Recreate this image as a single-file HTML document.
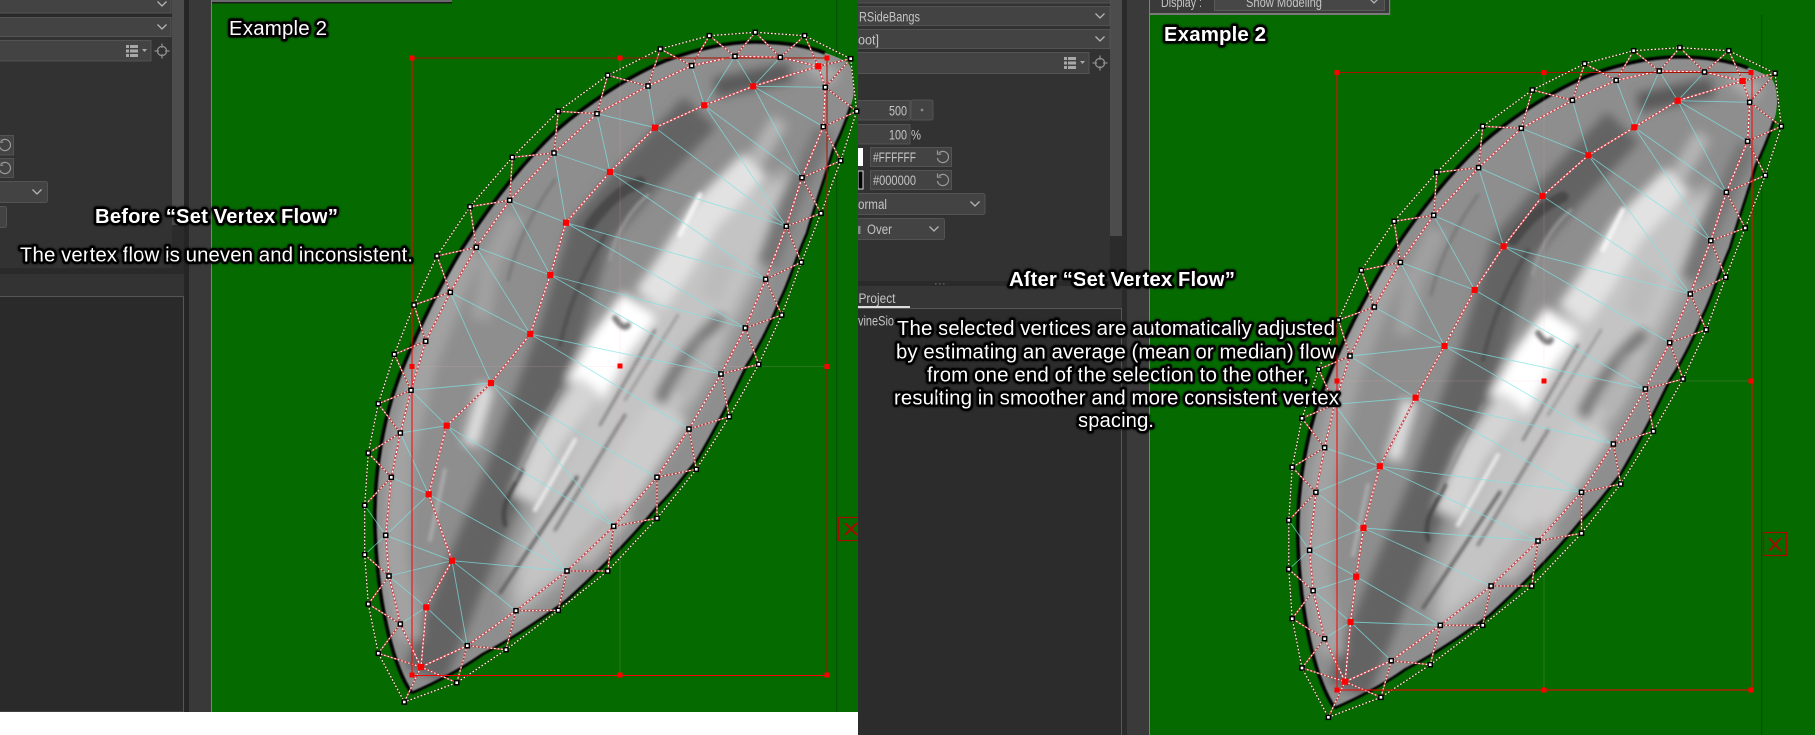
<!DOCTYPE html>
<html><head><meta charset="utf-8"><title>Set Vertex Flow</title>
<style>
html,body{margin:0;padding:0;background:#fff;width:1815px;height:735px;overflow:hidden}
svg{display:block}
.ui{font-family:"Liberation Sans",sans-serif;font-size:13.5px;fill:#c4c4c4}
.cap{font-family:"Liberation Sans",sans-serif;font-size:20.5px;fill:#fff;stroke:#000;stroke-width:5px;stroke-linejoin:round;paint-order:stroke fill;filter:drop-shadow(0 0 1px #000)}
.b{font-weight:bold}
.dd{fill:#434343;stroke:#535353;stroke-width:1}
.ch{fill:none;stroke:#b4b4b4;stroke-width:1.3}
</style></head><body>
<svg width="1815" height="735" viewBox="0 0 1815 735" xmlns="http://www.w3.org/2000/svg">
<defs>
<clipPath id="cr"><rect x="858" y="0" width="957" height="735"/></clipPath>
<filter id="bb" x="-20%" y="-20%" width="140%" height="140%"><feGaussianBlur stdDeviation="9"/></filter>
<filter id="bl" x="-20%" y="-20%" width="140%" height="140%"><feGaussianBlur stdDeviation="5"/></filter>
<filter id="bs" x="-10%" y="-10%" width="120%" height="120%"><feGaussianBlur stdDeviation="1.7"/></filter>
<filter id="be" x="-10%" y="-10%" width="120%" height="120%"><feGaussianBlur stdDeviation=".9"/></filter>
<clipPath id="cb"><path d="M411.7,693 C395,670 378,610 375,530 C373,470 385,410 403,367 C420,325 440,285 463,247 C490,205 520,165 557,130 C585,105 630,75 667,60 C700,48 730,42 755,42 C790,42 825,50 847,62 C856,70 855,95 851,105 C845,125 838,140 833,150 C825,178 815,205 807,233 C795,260 790,280 780,300 C770,325 760,345 747,365 C730,400 715,430 697,460 C685,475 670,495 657,507 C630,540 600,570 567,600 C540,620 510,640 483,654 C460,670 435,683 411.7,693 Z"/></clipPath>
<marker id="sq" markerUnits="userSpaceOnUse" markerWidth="9" markerHeight="9" refX="4.5" refY="4.5" overflow="visible"><rect x="1.7" y="1.7" width="5.6" height="5.6" fill="#000"/><rect x="3.2" y="3.2" width="2.6" height="2.6" fill="#fff"/></marker>
<marker id="sr" markerUnits="userSpaceOnUse" markerWidth="9" markerHeight="9" refX="4.5" refY="4.5" overflow="visible"><rect x="1.4" y="1.4" width="6.2" height="6.2" fill="#f00"/></marker>
<marker id="hd" markerUnits="userSpaceOnUse" markerWidth="9" markerHeight="9" refX="4.5" refY="4.5" overflow="visible"><rect x="2" y="2" width="5" height="5" fill="#f00"/></marker>

<g id="blade">
  <g clip-path="url(#cb)">
    <rect x="350" y="20" width="520" height="690" fill="#8e8e8e"/>
    <g filter="url(#bb)">
      <polygon fill="#c4c4c4" points="800,170 760,270 720,350 680,420 630,500 570,570 510,620 515,560 545,480 585,400 625,320 670,250 725,190"/>
    </g>
    <g filter="url(#bl)" fill="none" stroke-linecap="butt">
      <path d="M790,72 L715,88" stroke="#5a5a5a" stroke-width="20"/>
      <path d="M700,112 L640,175 L590,233 L560,333 L505,480 L465,575 L425,675" stroke="#646464" stroke-width="44"/>
      <path d="M780,120 L750,170" stroke="#b4b4b4" stroke-width="18"/>
      <path d="M755,165 L705,215 L675,265 L650,300" stroke="#e2e2e2" stroke-width="34"/>
      <path d="M640,305 L610,345 L585,390" stroke="#fff" stroke-width="42"/>
      <path d="M590,385 L550,440 L525,500" stroke="#d4d4d4" stroke-width="30"/>
      <path d="M728,255 L710,300" stroke="#bcbcbc" stroke-width="24"/>
      <path d="M723,317 C700,335 672,370 657,407" stroke="#727272" stroke-width="12"/>
      <path d="M712,345 L680,395" stroke="#b4b4b4" stroke-width="20"/>
      <path d="M670,410 L630,470 L600,510" stroke="#cccccc" stroke-width="40"/>
      <path d="M625,510 L580,560" stroke="#b8b4b4" stroke-width="22"/>
      <path d="M825,130 L790,205 L768,265" stroke="#747474" stroke-width="20"/>
      <path d="M470,250 L425,360 L400,460 L395,560 L410,640" stroke="#a2a2a2" stroke-width="26"/>
      <path d="M515,215 L490,265 L480,320" stroke="#a0a0a0" stroke-width="20"/>
      <path d="M835,80 L810,62" stroke="#aaa" stroke-width="18"/>
      <path d="M487,385 L470,445" stroke="#dedede" stroke-width="16"/>
    </g>
    <g filter="url(#bs)" fill="none" stroke-linecap="round">
      <path d="M640,182 C620,190 605,205 590,225" stroke="#484848" stroke-width="11"/>
      <path d="M605,235 C585,270 570,300 560,345" stroke="#505050" stroke-width="4"/>
      <path d="M522,470 C510,495 500,505 505,525" stroke="#444" stroke-width="4"/>
      <path d="M577,477 L500,593" stroke="#5a5a5a" stroke-width="3"/>
      <path d="M625,415 L555,530" stroke="#7c7c7c" stroke-width="3"/>
      <path d="M655,330 L600,425" stroke="#7c7c7c" stroke-width="2.5"/>
      <path d="M678,315 L625,400" stroke="#979797" stroke-width="2.5"/>
      <path d="M615,318 C620,325 625,330 628,325" stroke="#808080" stroke-width="6"/>
      <path d="M700,195 L680,235" stroke="#f4f4f4" stroke-width="5"/>
      <path d="M445,470 L430,540" stroke="#aaa" stroke-width="4"/>
      <path d="M648,195 C630,210 615,235 610,260" stroke="#9a9a9a" stroke-width="3"/>
      <path d="M555,180 C530,215 515,250 508,280" stroke="#787878" stroke-width="3"/>
      <path d="M575,440 L535,510" stroke="#eaeaea" stroke-width="4"/>
      <path d="M560,390 L515,480" stroke="#8a8a8a" stroke-width="2.5"/>
    </g>
  </g>
  <path d="M851,105 C845,125 838,140 833,150 C825,178 815,205 807,233 C795,260 790,280 780,300 C770,325 760,345 747,365 C730,400 715,430 697,460 C685,475 670,495 657,507 C630,540 600,570 567,600 C540,620 510,640 483,654 C460,670 435,683 411.7,693" fill="none" stroke="#000" stroke-width="2.6" filter="url(#be)"/>
  <path d="M411.7,693 C395,670 378,610 375,530 C373,470 385,410 403,367 C420,325 440,285 463,247 C490,205 520,165 557,130 C585,105 630,75 667,60 C700,48 730,42 755,42 C780,42 805,45 825,53" fill="none" stroke="#000" stroke-width="3.6" filter="url(#be)"/>
</g>

<polygon id="LO" fill="none" points="850.7,58.7 856.7,111.3 840.7,160.7 821,213.3 801.3,262.3 781.7,315 758.7,364.3 729.3,416.7 696.3,469.3 657,518.3 607.7,571 558.3,610.3 506,649.7 456.7,682.7 404.3,702 378.3,653.3 368.3,604 364.7,554.7 364.7,505.3 368.3,453 378.3,403.7 394.3,354.3 414,305 437,256 470,206.7 512.3,157.3 558.3,111.3 607.7,75.3 660.3,49 709.3,35.7 755.3,32.3 804.7,35.7"/>
<polygon id="LM" fill="none" points="818.3,66.3 780.3,57.3 735,56.3 691.7,65.7 648,86 597,113.7 554,153 509.7,200.3 476.3,247.3 450.3,292.3 425.7,341.3 411,390.3 400.3,433 391.3,477.3 385.7,535.3 389,576 400.3,624 421,667 467.3,645.7 516,610.7 567,571 613.7,526.3 657,477.3 689,429 721,374 745.3,328 765.7,279.3 786.3,226.3 802,177.7 823.3,126.7 825.3,87.3"/>
<polyline id="LS" fill="none" points="818.3,66.3 753.3,86.3 704.3,105.3 655,127.7 610,172 566,222.7 550.3,275 530.3,334 491,383 446.7,425.7 428.7,494.3 452,560.7 426.3,607.3 421,667"/>
<path id="LC" fill="none" d="M818.3,66.3 804.7,35.7 780.3,57.3 755.3,32.3 735,56.3 709.3,35.7 691.7,65.7 660.3,49 648,86 607.7,75.3 597,113.7 558.3,111.3 554,153 512.3,157.3 509.7,200.3 470,206.7 476.3,247.3 437,256 450.3,292.3 414,305 425.7,341.3 394.3,354.3 411,390.3 378.3,403.7 400.3,433 368.3,453 391.3,477.3 364.7,505.3 M364.7,554.7 389,576 368.3,604 400.3,624 378.3,653.3 421,667 404.3,702 M421,667 456.7,682.7 467.3,645.7 506,649.7 516,610.7 558.3,610.3 567,571 607.7,571 613.7,526.3 657,518.3 657,477.3 696.3,469.3 689,429 729.3,416.7 721,374 758.7,364.3 745.3,328 781.7,315 765.7,279.3 801.3,262.3 786.3,226.3 821,213.3 802,177.7 840.7,160.7 823.3,126.7 856.7,111.3 825.3,87.3 850.7,58.7 818.3,66.3"/>

<polygon id="RO" fill="none" points="1775.1,73.3 1781.3,126.3 1765.3,175.3 1745.2,228 1725.7,277.3 1706.2,329.7 1683,379 1653.4,431.3 1620.7,484 1581.5,533.3 1531.7,586 1482.7,625.3 1430.2,664.7 1380.9,697.3 1328.4,717.3 1302,668 1292.2,618.7 1288.8,569.3 1288.8,520.3 1292.2,467.3 1302,418.3 1318.7,369.3 1338.5,320 1361.4,270.3 1394.1,221.3 1436.8,172.3 1482.7,126.3 1532.4,90 1584.6,63.7 1633.6,50.7 1679.8,47.7 1728.8,50.7"/>
<polygon id="RM" fill="none" points="1742.7,81 1704.5,72 1659.3,71 1616.2,80.3 1572.4,100.3 1521.3,128.3 1478.6,167.7 1433.7,215.3 1400.4,262.3 1374.3,307 1350,356 1334.7,404.3 1324.6,447.7 1315.9,492.3 1309.6,550.3 1313.1,590.7 1324.6,638.7 1345.1,681.7 1391.3,660.7 1440.3,625.3 1491.1,586 1538,541 1581.5,492.3 1613.4,444 1645.4,389 1669.7,342.7 1690.3,294 1710.8,240.7 1726.4,192.3 1747.6,141.3 1749.7,102.3"/>
<polyline id="RS" fill="none" points="1742.7,81 1677.7,100.7 1634.3,127.3 1588.4,155.3 1542.5,196 1503.6,246.3 1474.7,290 1444.5,346 1415.6,397.7 1379.8,466.3 1363.5,528 1356.2,576.7 1350.6,622 1345.1,681.7"/>
<path id="RC" fill="none" d="M1742.7,81 1728.8,50.7 1704.5,72 1679.8,47.7 1659.3,71 1633.6,50.7 1616.2,80.3 1584.6,63.7 1572.4,100.3 1532.4,90 1521.3,128.3 1482.7,126.3 1478.6,167.7 1436.8,172.3 1433.7,215.3 1394.1,221.3 1400.4,262.3 1361.4,270.3 1374.3,307 1338.5,320 1350,356 1318.7,369.3 1334.7,404.3 1302,418.3 1324.6,447.7 1292.2,467.3 1315.9,492.3 1288.8,520.3 M1288.8,569.3 1313.1,590.7 1292.2,618.7 1324.6,638.7 1302,668 1345.1,681.7 1328.4,717.3 M1345.1,681.7 1380.9,697.3 1391.3,660.7 1430.2,664.7 1440.3,625.3 1482.7,625.3 1491.1,586 1531.7,586 1538,541 1581.5,533.3 1581.5,492.3 1620.7,484 1613.4,444 1653.4,431.3 1645.4,389 1683,379 1669.7,342.7 1706.2,329.7 1690.3,294 1725.7,277.3 1710.8,240.7 1745.2,228 1726.4,192.3 1765.3,175.3 1747.6,141.3 1781.3,126.3 1749.7,102.3 1775.1,73.3 1742.7,81"/>

<g id="cross" fill="none" stroke="#8c8c8c" stroke-width="1.3"><circle r="4.6"/><path d="M0,-7.5V-3M0,7.5V3M-7.5,0H-3M7.5,0H3"/></g>
<g id="list" fill="#a8a8a8"><rect x="0" y="0" width="3" height="3"/><rect x="4" y="0" width="8" height="3"/><rect x="0" y="4.5" width="3" height="3"/><rect x="4" y="4.5" width="8" height="3"/><rect x="0" y="9" width="3" height="3"/><rect x="4" y="9" width="8" height="3"/><path d="M16,4h5l-2.5,3z"/></g>
<g id="reset" fill="none" stroke="#9a9a9a" stroke-width="1.2"><path d="M-4,-4 A5.6,5.6 0 1 1 -5.6,1"/><path d="M-5.5,-6.5V-2.8H-1.8"/></g>
<path id="chev" class="ch" d="M-4.5,-2.5 L0,2 L4.5,-2.5"/>
</defs>

<rect width="1815" height="735" fill="#fff"/>

<!-- LEFT IMAGE -->
<rect x="0" y="0" width="172" height="268" fill="#323232"/>
<rect x="172" y="0" width="12" height="225" fill="#4c4c4c"/>
<rect x="172" y="225" width="12" height="45" fill="#2b2b2b"/>
<rect x="-2" y="-8" width="173" height="21" class="dd"/>
<rect x="0" y="14" width="172" height="3" fill="#2a2a2a"/>
<rect x="-2" y="17.5" width="173" height="19" class="dd"/>
<use href="#chev" x="162" y="4"/><use href="#chev" x="162" y="27"/>
<rect x="-2" y="40.5" width="153" height="20.5" class="dd"/>
<use href="#list" x="126" y="45"/>
<use href="#cross" x="162" y="51"/>
<rect x="-2" y="135.5" width="15.5" height="19.5" class="dd"/><use href="#reset" x="5" y="145"/>
<rect x="-2" y="158.5" width="15.5" height="19" class="dd"/><use href="#reset" x="5" y="168"/>
<rect x="-3" y="181.5" width="50.5" height="21" rx="2" class="dd"/><use href="#chev" x="37" y="192"/>
<rect x="-3" y="206.5" width="9.5" height="21" rx="2" class="dd"/>
<rect x="0" y="268" width="184" height="6" fill="#2a2a2a"/>
<rect x="0" y="274" width="184" height="22" fill="#333"/>
<rect x="-2" y="296.5" width="185.5" height="415.5" fill="#2a2a2a" stroke="#565656"/>
<rect x="184" y="0" width="5" height="712" fill="#252525"/>
<rect x="189" y="0" width="22" height="712" fill="#393939"/>
<rect x="211" y="0" width="2" height="712" fill="#7f7f7f"/>
<rect x="0" y="712" width="858" height="23" fill="#fff"/>
<rect x="212" y="0" width="646" height="712" fill="#056a00"/>
<rect x="212" y="0" width="240" height="2" fill="#6a6a6a"/><rect x="212" y="2" width="240" height="1.5" fill="#1c1c1c"/>
<rect x="836" y="0" width="1.2" height="712" fill="#035203"/>
<g fill="none" stroke="#a50c00" stroke-width="1.2"><rect x="838.5" y="517.5" width="24" height="23"/><path d="M845,523 L857,535M857,523 L845,535" stroke-width="2"/></g>

<use href="#blade"/>

<!-- RIGHT IMAGE -->
<g clip-path="url(#cr)">
<rect x="858" y="0" width="957" height="735" fill="#2b2b2b"/>
<rect x="858" y="0" width="252" height="281" fill="#323232"/>
<rect x="1110" y="0" width="12" height="236" fill="#4c4c4c"/>
<rect x="1110" y="236" width="12" height="50" fill="#2b2b2b"/>
<rect x="850" y="-6" width="260" height="9" class="dd"/>
<rect x="850" y="6.5" width="260" height="19" class="dd"/>
<rect x="850" y="29.5" width="260" height="19" class="dd"/>
<use href="#chev" x="1100" y="16"/><use href="#chev" x="1100" y="39"/>
<text class="ui" x="859" y="21.5" textLength="61" lengthAdjust="spacingAndGlyphs">RSideBangs</text>
<text class="ui" x="858" y="44.5" textLength="21" lengthAdjust="spacingAndGlyphs">oot]</text>
<rect x="850" y="52.5" width="239" height="21" class="dd"/>
<use href="#list" x="1064" y="57"/>
<use href="#cross" x="1100" y="63"/>
<rect x="850" y="100.5" width="60" height="19.5" class="dd"/>
<text class="ui" x="889" y="115.5" textLength="18" lengthAdjust="spacingAndGlyphs">500</text>
<rect x="911" y="100" width="22" height="20" rx="2" class="dd"/><circle cx="922" cy="110" r="1.4" fill="#888"/>
<rect x="850" y="124.5" width="60" height="19.5" class="dd"/>
<text class="ui" x="889" y="139.5" textLength="18" lengthAdjust="spacingAndGlyphs">100</text><text class="ui" x="911" y="139.5" textLength="10" lengthAdjust="spacingAndGlyphs">%</text>
<rect x="858" y="148" width="5" height="18" fill="#fff"/>
<rect x="858" y="171" width="5" height="18" fill="#000" stroke="#ddd"/>
<rect x="870.5" y="147.5" width="81" height="19" class="dd"/>
<rect x="870.5" y="170.5" width="81" height="19" class="dd"/>
<text class="ui" x="873" y="162" textLength="43" lengthAdjust="spacingAndGlyphs">#FFFFFF</text>
<text class="ui" x="873" y="185" textLength="43" lengthAdjust="spacingAndGlyphs">#000000</text>
<use href="#reset" x="943" y="157"/><use href="#reset" x="943" y="180"/>
<rect x="850" y="193.5" width="135" height="21" rx="2" class="dd"/>
<text class="ui" x="858" y="209" textLength="29" lengthAdjust="spacingAndGlyphs">ormal</text><use href="#chev" x="975" y="204"/>
<rect x="850" y="218.5" width="94.5" height="21" rx="2" class="dd"/>
<rect x="858" y="226" width="2.5" height="8" fill="#8a8a8a"/>
<text class="ui" x="867" y="234" textLength="25" lengthAdjust="spacingAndGlyphs">Over</text><use href="#chev" x="934" y="229"/>
<rect x="858" y="281" width="264" height="5" fill="#2a2a2a"/>
<g fill="#5a5a5a"><rect x="935" y="283" width="1.5" height="1.5"/><rect x="939" y="283" width="1.5" height="1.5"/><rect x="943" y="283" width="1.5" height="1.5"/></g>
<rect x="858" y="286" width="264" height="22" fill="#363636"/>
<text class="ui" x="858.5" y="303" textLength="37" lengthAdjust="spacingAndGlyphs">Project</text>
<rect x="858" y="306" width="52" height="2" fill="#ddd"/>
<rect x="850" y="308.5" width="271.5" height="440" fill="#2c2c2c" stroke="#565656"/>
<text class="ui" x="858" y="325.5" textLength="36" lengthAdjust="spacingAndGlyphs">vineSio</text>
<rect x="1122" y="0" width="5" height="735" fill="#2a2a2a"/>
<rect x="1127" y="0" width="22" height="735" fill="#3a3a3a"/>
<rect x="1149" y="0" width="2" height="735" fill="#7f7f7f"/>
<rect x="1150" y="0" width="665" height="735" fill="#056a00"/>
<rect x="1150" y="0" width="240" height="15" fill="#3a3a3a"/>
<rect x="1150" y="13" width="240" height="2" fill="#7a7a7a"/>
<rect x="1389" y="0" width="1.2" height="15" fill="#7a7a7a"/>
<text class="ui" x="1161" y="7" textLength="41" lengthAdjust="spacingAndGlyphs">Display :</text>
<rect x="1214.5" y="-6" width="170" height="16.5" fill="#474747" stroke="#5a5a5a"/>
<text class="ui" x="1246" y="7" textLength="76" lengthAdjust="spacingAndGlyphs">Show Modeling</text>
<use href="#chev" x="1374" y="1"/>
<rect x="1761" y="15" width="1.2" height="720" fill="#035203"/>
<g fill="none" stroke="#a50c00" stroke-width="1.2"><rect x="1763.5" y="532.5" width="23" height="23"/><path d="M1769,538 L1781,551M1781,538 L1769,551" stroke-width="2"/></g>
</g>

<use href="#blade" transform="translate(923,15)"/>

<!-- LEFT MESH -->
<g fill="none">
<path stroke="#7fe3e3" stroke-width=".9" opacity=".72" d="M753.3,86.3 735,56.3M753.3,86.3 780.3,57.3M753.3,86.3 825.3,87.3M753.3,86.3 823.3,126.7M753.3,86.3 802,177.7M704.3,105.3 691.7,65.7M704.3,105.3 735,56.3M704.3,105.3 802,177.7M704.3,105.3 786.3,226.3M655,127.7 648,86M655,127.7 597,113.7M655,127.7 786.3,226.3M610,172 597,113.7M610,172 554,153M610,172 786.3,226.3M610,172 765.7,279.3M566,222.7 554,153M566,222.7 509.7,200.3M566,222.7 765.7,279.3M566,222.7 745.3,328M550.3,275 509.7,200.3M550.3,275 476.3,247.3M550.3,275 745.3,328M550.3,275 721,374M530.3,334 476.3,247.3M530.3,334 450.3,292.3M530.3,334 721,374M530.3,334 689,429M491,383 450.3,292.3M491,383 411,390.3M491,383 657,477.3M491,383 613.7,526.3M446.7,425.7 411,390.3M446.7,425.7 400.3,433M446.7,425.7 613.7,526.3M446.7,425.7 567,571M428.7,494.3 400.3,433M428.7,494.3 391.3,477.3M428.7,494.3 385.7,535.3M428.7,494.3 567,571M452,560.7 385.7,535.3M452,560.7 389,576M452,560.7 467.3,645.7M452,560.7 516,610.7M452,560.7 567,571M426.3,607.3 389,576M426.3,607.3 400.3,624M426.3,607.3 467.3,645.7M364.7,505.3 385.7,535.3 364.7,554.7"/>
<use href="#LM" stroke="#c8484e" stroke-width="1.9"/><use href="#LM" stroke="#fff" stroke-width="1.2" stroke-dasharray="2 2"/>
<use href="#LS" stroke="#c8484e" stroke-width="1.9"/><use href="#LS" stroke="#fff" stroke-width="1.2" stroke-dasharray="2 2"/>
<use href="#LC" stroke="#b43c3c" stroke-width="1.6"/><use href="#LC" stroke="#fff" stroke-width="1.1" stroke-dasharray="1.6 2"/>
<use href="#LO" stroke="#2f3b00" stroke-width="1.5"/><use href="#LO" stroke="#fff" stroke-width="1.2" stroke-dasharray="1.6 2"/>
<path stroke="#f00" stroke-width="1" d="M412,58V675.5H827"/>
<path stroke="#a81200" stroke-width="1" d="M412,58H827V675"/>
<path stroke="#ffb0b0" stroke-width=".8" opacity=".2" d="M620,58V675M412,366.5H827"/>
<polyline points="412,58 620,58 827,58 827,366.5 827,675 620,675 412,675 412,366.5 620,366" marker-start="url(#hd)" marker-mid="url(#hd)" marker-end="url(#hd)"/>
<use href="#LO" marker-start="url(#sq)" marker-mid="url(#sq)"/>
<use href="#LM" marker-mid="url(#sq)"/>
<use href="#LS" marker-start="url(#sr)" marker-mid="url(#sr)" marker-end="url(#sr)"/>
</g>

<!-- RIGHT MESH -->
<g fill="none">
<path stroke="#7fe3e3" stroke-width=".9" opacity=".72" d="M1677.7,100.7 1659.3,71M1677.7,100.7 1704.5,72M1677.7,100.7 1749.7,102.3M1677.7,100.7 1747.6,141.3M1677.7,100.7 1726.4,192.3M1634.3,127.3 1616.2,80.3M1634.3,127.3 1659.3,71M1634.3,127.3 1726.4,192.3M1634.3,127.3 1710.8,240.7M1588.4,155.3 1572.4,100.3M1588.4,155.3 1521.3,128.3M1588.4,155.3 1710.8,240.7M1588.4,155.3 1690.3,294M1542.5,196 1521.3,128.3M1542.5,196 1478.6,167.7M1542.5,196 1690.3,294M1503.6,246.3 1478.6,167.7M1503.6,246.3 1433.7,215.3M1503.6,246.3 1690.3,294M1503.6,246.3 1669.7,342.7M1474.7,290 1433.7,215.3M1474.7,290 1400.4,262.3M1474.7,290 1645.4,389M1444.5,346 1400.4,262.3M1444.5,346 1374.3,307M1444.5,346 1350,356M1444.5,346 1613.4,444M1444.5,346 1645.4,389M1415.6,397.7 1350,356M1415.6,397.7 1334.7,404.3M1415.6,397.7 1581.5,492.3M1415.6,397.7 1613.4,444M1379.8,466.3 1324.6,447.7M1379.8,466.3 1315.9,492.3M1379.8,466.3 1334.7,404.3M1379.8,466.3 1538,541M1379.8,466.3 1581.5,492.3M1363.5,528 1309.6,550.3M1363.5,528 1315.9,492.3M1363.5,528 1491.1,586M1363.5,528 1538,541M1356.2,576.7 1313.1,590.7M1356.2,576.7 1309.6,550.3M1356.2,576.7 1440.3,625.3M1350.6,622 1324.6,638.7M1350.6,622 1313.1,590.7M1350.6,622 1391.3,660.7M1350.6,622 1440.3,625.3M1288.8,520.3 1309.6,550.3 1288.8,569.3"/>
<use href="#RM" stroke="#c8484e" stroke-width="1.9"/><use href="#RM" stroke="#fff" stroke-width="1.2" stroke-dasharray="2 2"/>
<use href="#RS" stroke="#c8484e" stroke-width="1.9"/><use href="#RS" stroke="#fff" stroke-width="1.2" stroke-dasharray="2 2"/>
<use href="#RC" stroke="#b43c3c" stroke-width="1.6"/><use href="#RC" stroke="#fff" stroke-width="1.1" stroke-dasharray="1.6 2"/>
<use href="#RO" stroke="#2f3b00" stroke-width="1.5"/><use href="#RO" stroke="#fff" stroke-width="1.2" stroke-dasharray="1.6 2"/>
<path stroke="#f00" stroke-width="1" d="M1337,73V690H1752V73"/>
<path stroke="#a81200" stroke-width="1" d="M1337,72.5H1752"/>
<path stroke="#ffb0b0" stroke-width=".8" opacity=".2" d="M1544,72V690M1337,381H1752"/>
<polyline points="1337,72.5 1544,72.5 1751,72.5 1751,381 1751,690 1544,690 1337,690 1337,381 1544,381" marker-start="url(#hd)" marker-mid="url(#hd)" marker-end="url(#hd)"/>
<use href="#RO" marker-start="url(#sq)" marker-mid="url(#sq)"/>
<use href="#RM" marker-mid="url(#sq)"/>
<use href="#RS" marker-start="url(#sr)" marker-mid="url(#sr)" marker-end="url(#sr)"/>
</g>

<!-- CAPTIONS -->
<text class="cap" x="229" y="35" textLength="98">Example 2</text>
<text class="cap b" x="95" y="223" textLength="243">Before “Set Vertex Flow”</text>
<text class="cap" x="20" y="261.5" textLength="393">The vertex flow is uneven and inconsistent.</text>
<text class="cap b" x="1164" y="41" textLength="102">Example 2</text>
<text class="cap b" x="1009" y="286" textLength="226">After “Set Vertex Flow”</text>
<text class="cap" x="897" y="335" textLength="438">The selected vertices are automatically adjusted</text>
<text class="cap" x="896" y="358.3" textLength="440">by estimating an average (mean or median) flow</text>
<text class="cap" x="927" y="381.5" textLength="382">from one end of the selection to the other,</text>
<text class="cap" x="894" y="404.3" textLength="445">resulting in smoother and more consistent vertex</text>
<text class="cap" x="1078" y="427" textLength="76">spacing.</text>
</svg>
</body></html>
